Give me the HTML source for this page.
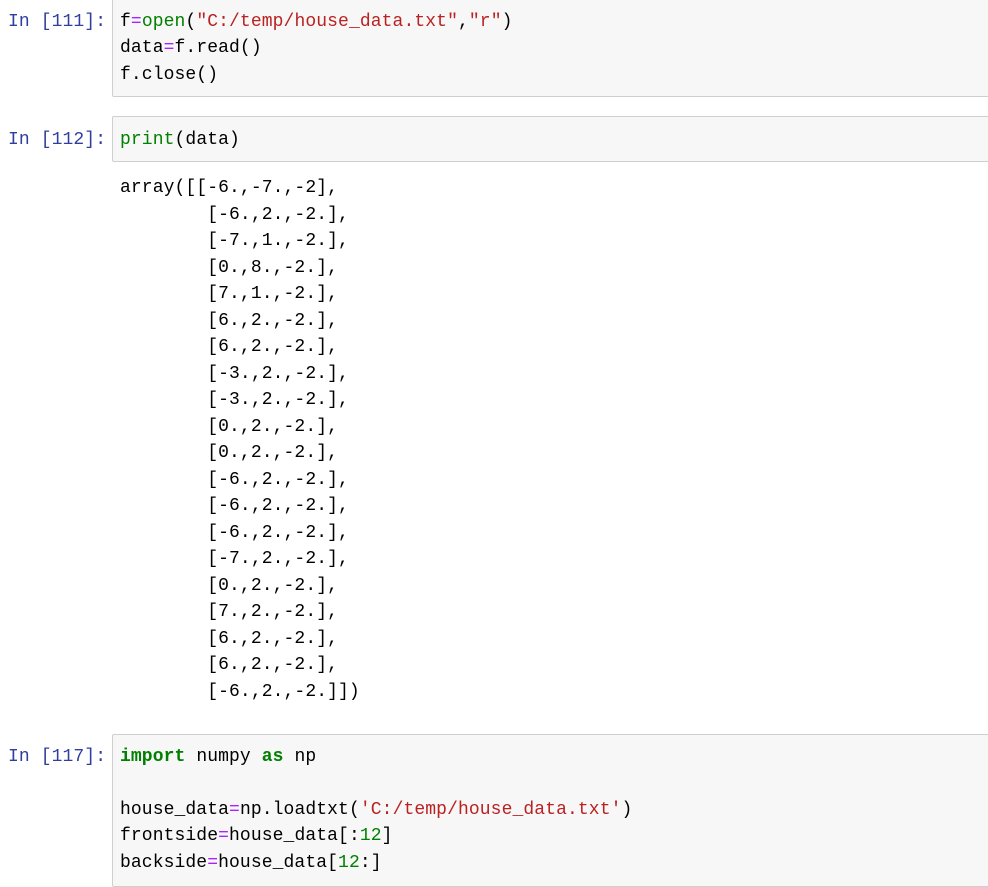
<!DOCTYPE html>
<html><head><meta charset="utf-8"><style>
body{margin:0;width:988px;height:887px;background:#fff;overflow:hidden;position:relative;font-family:"Liberation Mono","Noto Sans CJK KR",monospace;font-size:18px;letter-spacing:0.1px}
.p{position:absolute;left:8px;color:#303f9f;white-space:pre;line-height:26.5px}
.box{position:absolute;left:112px;width:890px;background:#f7f7f7;border:1px solid #cfcfcf;border-radius:2px}
.l{position:absolute;left:120px;white-space:pre;color:#000;line-height:26.5px}
.g{color:#008000}.r{color:#ba2121}.m{color:#aa22ff}.k{color:#008000;font-weight:bold}.n{color:#008000}
</style></head><body>
<div class="box" style="top:-2px;height:97px"></div>
<div class="p" style="top:9px">In [111]:</div>
<div class="l" style="top:9px">f<span class="m">=</span><span class="g">open</span>(<span class="r">"C:/temp/house_data.txt"</span>,<span class="r">"r"</span>)</div>
<div class="l" style="top:35px">data<span class="m">=</span>f.read()</div>
<div class="l" style="top:62px">f.close()</div>

<div class="box" style="top:116px;height:44px"></div>
<div class="p" style="top:127px">In [112]:</div>
<div class="l" style="top:127px"><span class="g">print</span>(data)</div>

<div class="l" style="top:175px;line-height:26.5px">array([[-6.,-7.,-2],
        [-6.,2.,-2.],
        [-7.,1.,-2.],
        [0.,8.,-2.],
        [7.,1.,-2.],
        [6.,2.,-2.],
        [6.,2.,-2.],
        [-3.,2.,-2.],
        [-3.,2.,-2.],
        [0.,2.,-2.],
        [0.,2.,-2.],
        [-6.,2.,-2.],
        [-6.,2.,-2.],
        [-6.,2.,-2.],
        [-7.,2.,-2.],
        [0.,2.,-2.],
        [7.,2.,-2.],
        [6.,2.,-2.],
        [6.,2.,-2.],
        [-6.,2.,-2.]])</div>

<div class="box" style="top:734px;height:151px"></div>
<div class="p" style="top:744px">In [117]:</div>
<div class="l" style="top:744px"><span class="k">import</span> numpy <span class="k">as</span> np</div>
<div class="l" style="top:797px">house_data<span class="m">=</span>np.loadtxt(<span class="r">'C:/temp/house_data.txt'</span>)</div>
<div class="l" style="top:823px">frontside<span class="m">=</span>house_data[:<span class="n">12</span>]</div>
<div class="l" style="top:850px">backside<span class="m">=</span>house_data[<span class="n">12</span>:]</div>
</body></html>
